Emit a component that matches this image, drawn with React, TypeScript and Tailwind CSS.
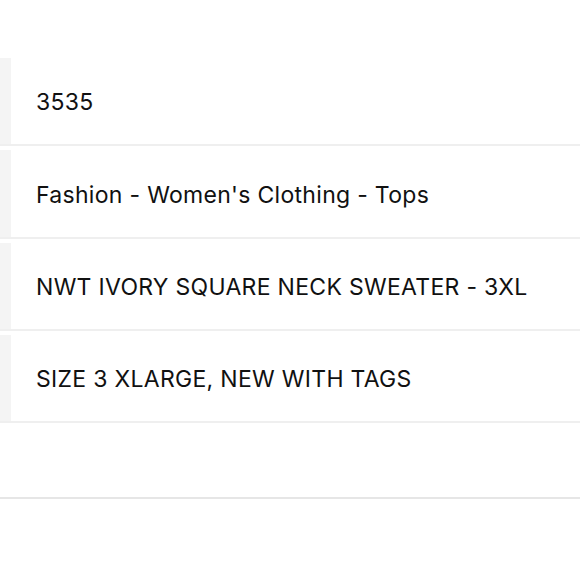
const rows = [
  "3535",
  "Fashion - Women's Clothing - Tops",
  "NWT IVORY SQUARE NECK SWEATER - 3XL",
  "SIZE 3 XLARGE, NEW WITH TAGS",
];

export default function App() {
  return (
    <div className="h-[580px] w-[580px] overflow-hidden bg-white font-['Inter',sans-serif] text-[#111]">
      <div className="h-[54px]" />
      {rows.map((text) => (
        <div key={text} className="flex h-[92.3px] border-b-2 border-[#efefef]">
          <div className="mt-[4px] w-[11px] bg-[#f4f4f4]" />
          <div className="flex flex-1 items-center pl-[25px] pt-[7px] text-[23px] tracking-[0.3px]">{text}</div>
        </div>
      ))}
      <div className="h-[76px] border-b-2 border-[#e6e6e6]" />
    </div>
  );
}
